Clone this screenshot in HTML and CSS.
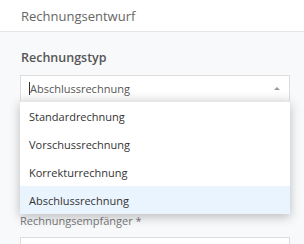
FILE: index.html
```html
<!DOCTYPE html>
<html lang="de">

<head>
  <meta charset="UTF-8">
  <meta name="viewport" content="width=device-width, initial-scale=1.0">
  <title>Rechnungsentwurf</title>
  <link rel="stylesheet" href="styles.css">
</head>

<body>

  <div class="header">
    <span>Rechnungsentwurf</span>
  </div>

  <div class="form">
    <div class="field">
      <label class="field__title">Rechnungstyp</label>
      <div class="select">
        <div class="select__input">
          <span class="select__caret"></span>Abschlussrechnung
          <span class="select__arrow"></span>
        </div>
        <ul class="select__menu">
          <li class="select__option">Standardrechnung</li>
          <li class="select__option">Vorschussrechnung</li>
          <li class="select__option">Korrekturrechnung</li>
          <li class="select__option select__option_active">Abschlussrechnung</li>
        </ul>
      </div>
    </div>

    <div class="field">
      <label class="field__label">Rechnungsempfänger *</label>
      <div class="field__box"></div>
    </div>
  </div>

</body>

</html>
```

FILE: styles.css
```css
body {
  margin: 0;
  height: 244px;
  overflow: hidden;
  background-color: #f8f9fb;
  font-family: "Open Sans", "Noto Sans", sans-serif;
}

.header {
  height: 31px;
  padding-left: 21px;
  background-color: #fff;
  border-bottom: 1px solid #e4e5e7;
  display: flex;
  align-items: center;
  font-size: 13px;
  color: #666;
}

.form {
  padding: 17px 14px 0 20px;
}

.field__title {
  display: block;
  padding-left: 1px;
  font-size: 12.5px;
  font-weight: 600;
  color: #555;
  line-height: 18px;
}

.select {
  position: relative;
  margin-top: 8px;
}

.select__input {
  position: relative;
  height: 25px;
  padding-left: 8px;
  display: flex;
  align-items: center;
  background: linear-gradient(#fff 60%, #f6f6f6);
  border: 1px solid #dcdcdc;
  font-size: 11px;
  color: #555;
}

.select__caret {
  width: 1px;
  height: 13px;
  background-color: #333;
}

.select__arrow {
  position: absolute;
  right: 9px;
  top: 11px;
  border-left: 3.5px solid transparent;
  border-right: 3.5px solid transparent;
  border-bottom: 3px solid #999;
}

.select__menu {
  position: absolute;
  left: 0;
  right: 0;
  top: 26px;
  z-index: 2;
  margin: 0;
  padding: 0;
  list-style: none;
  background-color: #fff;
  border-top: 1px solid #e6e6e6;
  box-shadow: 0 3px 10px rgba(0, 0, 0, 0.25);
}

.select__option {
  height: 28px;
  padding-left: 9px;
  display: flex;
  align-items: center;
  font-size: 11px;
  color: #333;
}

.select__option_active {
  background-color: #eaf4fe;
}

.field__label {
  display: block;
  margin-top: 111px;
  font-size: 11px;
  color: #777;
  line-height: 16px;
}

.field__box {
  height: 26px;
  margin-top: 8px;
  background-color: #fff;
  border: 1px solid #dcdcdc;
}
```
